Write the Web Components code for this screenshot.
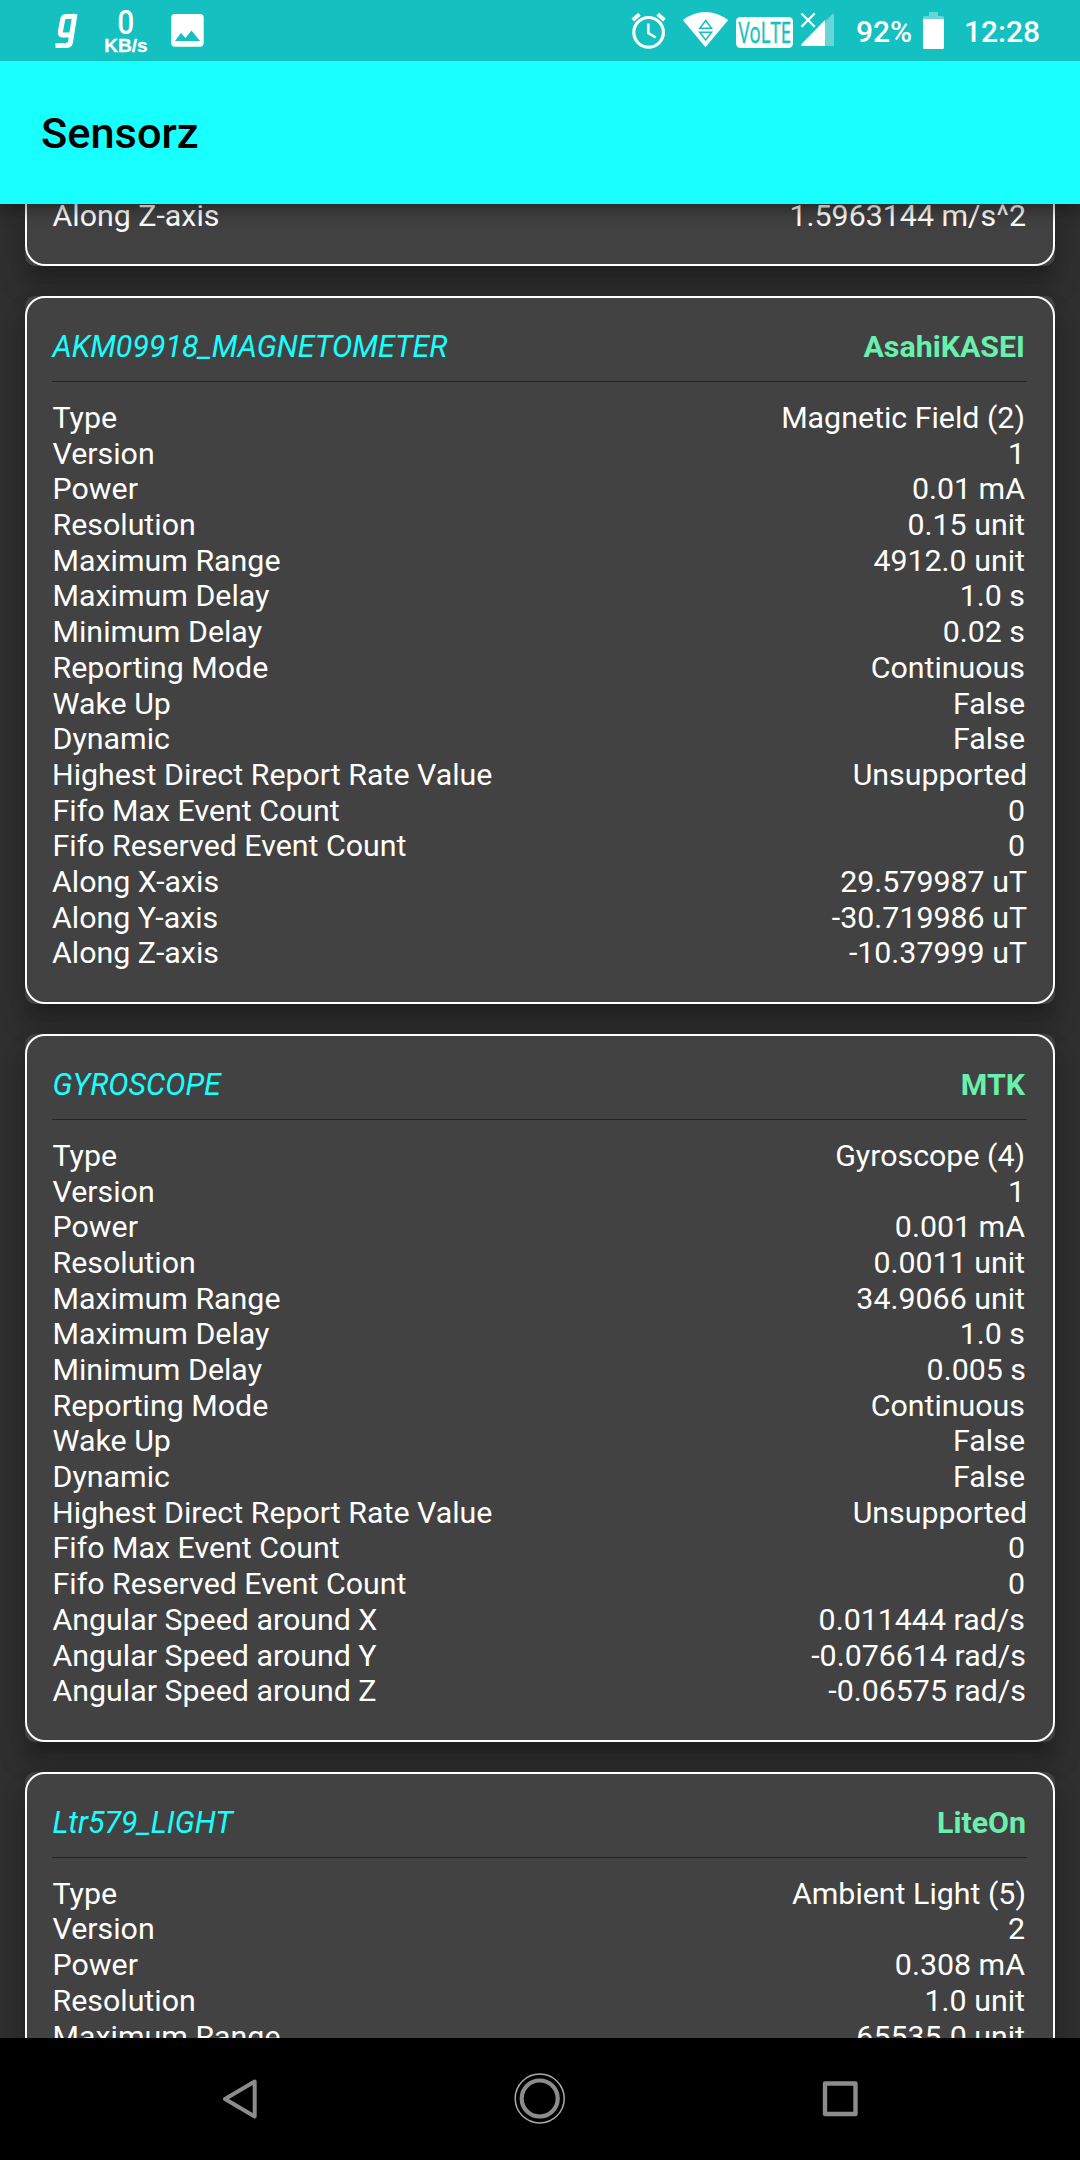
<!DOCTYPE html>
<html lang="en">
<head>
<meta charset="utf-8">
<title>Sensorz</title>
<style>
html,body{margin:0;height:2160px;background:#303030;overflow:hidden}
body{font-family:Roboto,"Liberation Sans",sans-serif}
</style>
</head>
<body>
<sensorz-app></sensorz-app>
<script>
const define = (name, html, after) => {
  const t = document.createElement('template');
  t.innerHTML = html;
  customElements.define(name, class extends HTMLElement {
    constructor() { super(); this.attachShadow({mode: 'open'}).append(t.content.cloneNode(true)); }
    connectedCallback() { if (after) after(this, this.shadowRoot); }
  });
};

define('status-bar', `
<style>
:host{display:flex;position:relative;z-index:3;height:61px;background:#14c0c0;color:#fff;box-sizing:border-box;align-items:flex-start;font-weight:500}
svg{display:block;flex:none;overflow:visible}
.grow{flex:1}
.net{display:flex;flex-direction:column;align-items:center;width:44px;margin-left:22px;padding-top:9px}
.net b{font:500 34px/26px Roboto,sans-serif;transform:scaleX(.88)}
.net span{font:bold 19px/19px "Liberation Sans",sans-serif;white-space:nowrap;padding-top:1px;-webkit-text-stroke:.3px #fff}
.t{font-size:30px;line-height:35px;padding-top:14px;white-space:nowrap}
.pct{margin-left:21px;width:57px}
.time{margin-left:20px;width:116px}
</style>
<svg style="margin-left:50px" width="32" height="61" viewBox="50 0 32 61" fill="none" stroke="#fff" stroke-width="5" stroke-linejoin="round"><path d="M74.500 16.500H66Q63.500 16.500 62.800 19L60.300 32Q60 35 63 35H71.500M75 14L70.500 42Q70 45.500 66 45.500H55.500"/></svg>
<div class="net"><b>0</b><span>KB/s</span></div>
<svg style="margin-left:23px" width="33" height="61" viewBox="171 0 33 61"><path fill="#fff" fill-rule="evenodd" d="M175 14H200Q203.700 14 203.700 17.700V43Q203.700 46.700 200 46.700H175Q171.200 46.700 171.200 43V17.700Q171.200 14 175 14ZM175 41H200L191.500 30.500L185.500 38L181 33Z"/></svg>
<div class="grow"></div>
<svg width="36" height="61" viewBox="630 0 36 61" fill="none" stroke="#fff" stroke-width="3.200"><circle cx="648.600" cy="32.300" r="14.800"/><path d="M648.300 23.500V33L655.800 37.500" stroke-width="2.600"/><path d="M632.800 20L639.500 14.300M657.700 14.300L664.500 20" stroke-width="3.800"/></svg>
<svg style="margin-left:17px" width="45" height="61" viewBox="683 0 45 61"><path fill="#fff" d="M682.800 20Q705.500 4 728.200 20L705.500 47.200Z"/><path fill="none" stroke="#14c0c0" stroke-width="1.500" d="M705.700 20.500L711.500 28.200H699.800ZM699.800 32.300H711.500L705.700 40Z"/></svg>
<svg style="margin-left:8px" width="57" height="61" viewBox="736 0 57 61"><rect x="736" y="17" width="57" height="31" rx="4.500" fill="#fff"/><text transform="translate(738.500 42.700) scale(1 1.060)" textLength="52.500" lengthAdjust="spacingAndGlyphs" font-family="Open Sans" font-weight="400" font-size="28" fill="#14c0c0" stroke="#14c0c0" stroke-width=".4">VoLTE</text></svg>
<svg style="margin-left:8px" width="34" height="61" viewBox="801 0 34 61"><path fill="#fff" fill-opacity=".35" d="M825 21.500L833 13.500Q834 13 834 14.500V45Q834 46 833 46H825Z"/><path fill="#fff" d="M825 20V46H802Q800.500 45.500 801.500 44Z"/><path stroke="#fff" stroke-width="2.300" d="M801.500 13.500L814.700 26.700M814.700 13.500L801.500 26.700"/></svg>
<div class="t pct">92%</div>
<svg style="margin-left:10px" width="21" height="61" viewBox="923 0 21 61"><path fill="#fff" fill-opacity=".35" d="M929 12H938V16H942Q944 16 944 18V19H923V18Q923 16 925 16H929Z"/><path fill="#fff" d="M923 19H944V47.500Q944 49 942.500 49H924.500Q923 49 923 47.500Z"/></svg>
<div class="t time">12:28</div>
`);

define('app-bar', `
<style>
:host{display:flex;position:relative;z-index:2;height:142.700px;align-items:center;padding:3px 0 0 41px;box-sizing:border-box;background:#18ffff;color:#000;font-size:43.350px;font-weight:500;line-height:50px;box-shadow:0 5px 10px -2px #0003,0 10px 13px #00000024,0 3px 26px #0000001f}
</style><slot></slot>`);

define('sensor-row', `
<style>
:host{display:flex;justify-content:space-between;height:35.700px;line-height:35.700px;white-space:nowrap;padding:0 var(--end,2px) 0 .5px}
</style><span><slot></slot></span><span class="v"></span>`, (h, r) => {
  const v = h.getAttribute('value');
  r.querySelector('.v').textContent = v;
  if (/Unsupported|uT$/.test(v)) h.style.setProperty('--end', '-.5px');
  else if (/^-|005 s$|Ambient/.test(v)) h.style.setProperty('--end', '1px');
});

define('sensor-card', `
<style>
:host{display:block;box-sizing:border-box;height:707.700px;flex:none;background:#424242;border-radius:10px;box-shadow:0 13px 13px -8px #0003,0 20px 26px 3px #00000024,0 8px 36px 5px #0000001f}
.b{height:100%;box-sizing:border-box;border:2px solid #fff;border-radius:20px;padding:31px 26px 0 25px}
header{display:flex;justify-content:space-between;height:35.700px;line-height:35.700px;padding-bottom:16.500px;border-bottom:1px solid #242424;margin-bottom:17.700px}
i{color:#18ffff;padding-left:.5px}b{color:#69f0ae;padding-right:2px}
:host([vendor=LiteOn]) b{padding-right:1px}
</style><div class="b"><header><i></i><b></b></header><slot></slot></div>`, (h, r) => {
  r.querySelector('i').textContent = h.getAttribute('name');
  r.querySelector('b').textContent = h.getAttribute('vendor');
});

define('nav-bar', `
<style>
:host{display:flex;justify-content:center;position:relative;z-index:3;height:122px;background:#000;flex:none}
svg{display:block;width:60px;height:60px}
.c{display:flex;width:300px;justify-content:center;padding-top:30px}
</style>
<div class="c"><svg viewBox="210 2068 60 60" fill="none" stroke="#8c8c8c" stroke-width="4" stroke-linejoin="round"><path d="M254.700 2081.500V2116.500L225 2099Z"/></svg></div>
<div class="c"><svg viewBox="510 2068 60 60" fill="none" stroke="#8c8c8c"><circle cx="539.700" cy="2098.500" r="24.500" stroke-width="1.500" stroke="#aaa"/><circle cx="539.700" cy="2098.500" r="18" stroke-width="4.200"/></svg></div>
<div class="c"><svg viewBox="810 2068 60 60" fill="none" stroke="#8c8c8c" stroke-width="4.400" stroke-linejoin="round"><rect x="825" y="2083.500" width="30.500" height="30.500"/></svg></div>
`);

const card = (name, vendor, rows) => `<sensor-card name="${name}" vendor="${vendor}">${rows.map(([k, v]) => `<sensor-row value="${v}">${k}</sensor-row>`).join('')}</sensor-card>`;
const base = (type, ver, power, res, range, min) => [['Type', type], ['Version', ver], ['Power', power], ['Resolution', res], ['Maximum Range', range], ['Maximum Delay', '1.0 s'], ['Minimum Delay', min], ['Reporting Mode', 'Continuous'], ['Wake Up', 'False'], ['Dynamic', 'False'], ['Highest Direct Report Rate Value', 'Unsupported'], ['Fifo Max Event Count', '0'], ['Fifo Reserved Event Count', '0']];

define('sensorz-app', `
<style>
:host{display:flex;flex-direction:column;width:1080px;height:2160px;overflow:hidden;background:#303030}
main{flex:1;min-height:0;overflow:hidden;display:flex;flex-direction:column;justify-content:flex-start;gap:30.200px;padding:0 25px;color:#fff;font-size:30.350px}
.last{height:62.300px;display:flex;flex-direction:column;justify-content:flex-end;flex:none;background:#424242;border-radius:0 0 10px 10px;box-shadow:0 13px 13px -8px #0003,0 20px 26px 3px #00000024,0 8px 36px 5px #0000001f}
.last div{box-sizing:border-box;height:90px;flex:none;border:2px solid #fff;border-top:0;border-radius:0 0 20px 20px;padding:22px 26px 0 25px}
.last sensor-row{--end:1px}
</style>
<status-bar></status-bar>
<app-bar>Sensorz</app-bar>
<main>
<div class="last"><div><sensor-row value="1.5963144 m/s^2">Along Z-axis</sensor-row></div></div>
${card('AKM09918_MAGNETOMETER', 'AsahiKASEI', [...base('Magnetic Field (2)', '1', '0.01 mA', '0.15 unit', '4912.0 unit', '0.02 s'), ['Along X-axis', '29.579987 uT'], ['Along Y-axis', '-30.719986 uT'], ['Along Z-axis', '-10.37999 uT']])}
${card('GYROSCOPE', 'MTK', [...base('Gyroscope (4)', '1', '0.001 mA', '0.0011 unit', '34.9066 unit', '0.005 s'), ['Angular Speed around X', '0.011444 rad/s'], ['Angular Speed around Y', '-0.076614 rad/s'], ['Angular Speed around Z', '-0.06575 rad/s']])}
${card('Ltr579_LIGHT', 'LiteOn', base('Ambient Light (5)', '2', '0.308 mA', '1.0 unit', '65535.0 unit', '0.0 s').slice(0, 5))}
</main>
<nav-bar></nav-bar>`);
</script>
</body>
</html>
